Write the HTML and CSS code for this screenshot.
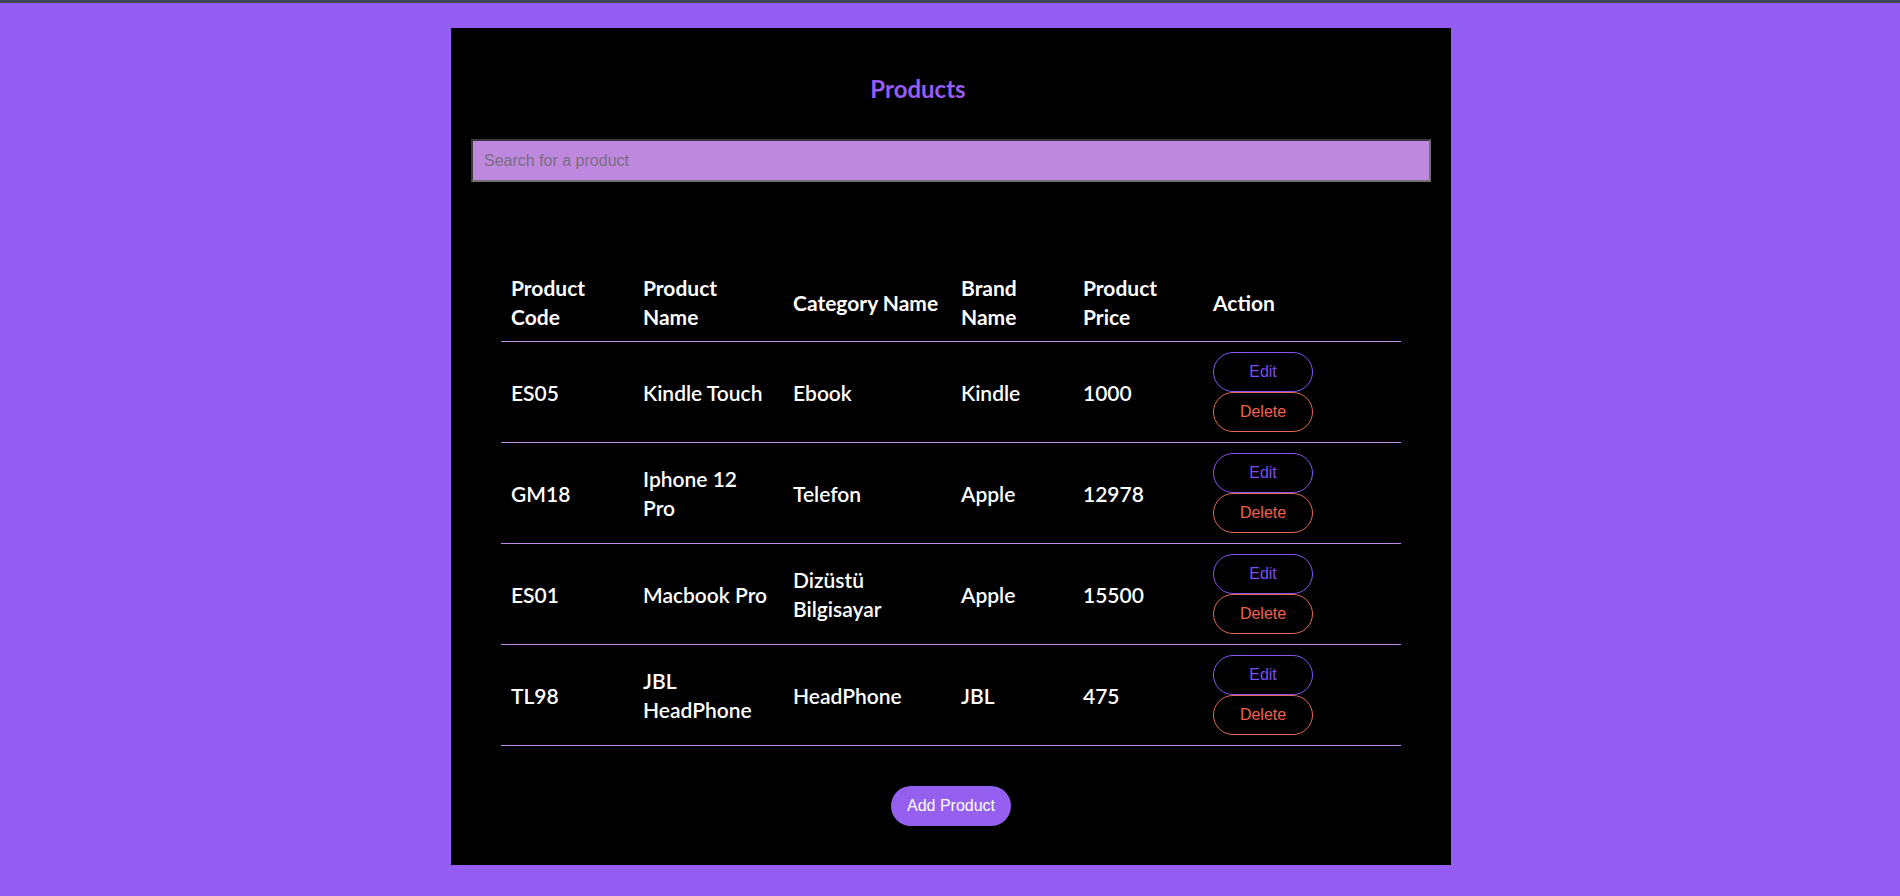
FILE: index.html
```html
<!DOCTYPE html>
<html lang="en">
<head>
<meta charset="utf-8">
<title>Products</title>
<link rel="stylesheet" href="styles.css">
</head>
<body>
<div class="topbar"></div>
<div class="page">
<main class="card">
  <h1 class="title">Products</h1>
  <input class="search" type="text" placeholder="Search for a product" autofocus>
  <table class="products">
    <colgroup>
      <col class="c1"><col class="c2"><col class="c3"><col class="c4"><col class="c5"><col class="c6">
    </colgroup>
    <thead>
      <tr>
        <th>Product Code</th>
        <th>Product Name</th>
        <th>Category Name</th>
        <th>Brand Name</th>
        <th>Product Price</th>
        <th>Action</th>
      </tr>
    </thead>
    <tbody>
      <tr>
        <td>ES05</td>
        <td class="name">Kindle Touch</td>
        <td>Ebook</td>
        <td>Kindle</td>
        <td>1000</td>
        <td><button class="btn btn-edit">Edit</button><button class="btn btn-delete">Delete</button></td>
      </tr>
      <tr>
        <td>GM18</td>
        <td class="name">Iphone 12 Pro</td>
        <td>Telefon</td>
        <td>Apple</td>
        <td>12978</td>
        <td><button class="btn btn-edit">Edit</button><button class="btn btn-delete">Delete</button></td>
      </tr>
      <tr>
        <td>ES01</td>
        <td class="name">Macbook Pro</td>
        <td>Dizüstü Bilgisayar</td>
        <td>Apple</td>
        <td>15500</td>
        <td><button class="btn btn-edit">Edit</button><button class="btn btn-delete">Delete</button></td>
      </tr>
      <tr>
        <td>TL98</td>
        <td class="name">JBL HeadPhone</td>
        <td>HeadPhone</td>
        <td>JBL</td>
        <td>475</td>
        <td><button class="btn btn-edit">Edit</button><button class="btn btn-delete">Delete</button></td>
      </tr>
    </tbody>
  </table>
  <div class="actions">
    <button class="add">Add Product</button>
  </div>
</main>
</div>
</body>
</html>
```
FILE: styles.css
```css
html, body {
  margin: 0;
  padding: 0;
}
body {
  background: #955ef2;
  font-family: "Lato", "Liberation Sans", sans-serif;
}
.topbar {
  height: 3px;
  background: #3f4552;
}
.page {
  padding-left: 2px;
}
.card {
  width: 1000px;
  margin: 25px auto 0;
  background: #000;
  padding: 46px 0 39px;
  box-sizing: border-box;
  display: flex;
  flex-direction: column;
  align-items: center;
}
.title {
  margin: 0;
  font-size: 24px;
  line-height: 29px;
  font-weight: 700;
  color: #985cf6;
  padding-right: 66px;
}
.search {
  margin-top: 36px;
  width: 960px;
  height: 43px;
  box-sizing: border-box;
  background: #be88de;
  border-width: 2px;
  border-style: solid;
  border-color: #3a3a3a #707070 #707070 #3a3a3a;
  padding: 0 11px;
  font-family: "Liberation Sans", Arial, sans-serif;
  font-size: 16px;
  color: #222;
  caret-color: #111;
  outline: none;
}
.search::placeholder {
  color: #7a6e84;
}
.products {
  margin-top: 82px;
  width: 900px;
  table-layout: fixed;
  border-collapse: collapse;
  color: #fff;
  font-size: 21px;
  line-height: 29px;
}
.c1 { width: 132px; }
.c2 { width: 150px; }
.c3 { width: 168px; }
.c4 { width: 122px; }
.c5 { width: 130px; }
.c6 { width: 198px; }
.products th,
.products td {
  padding: 10px 8px 10px 10px;
  text-align: left;
  vertical-align: middle;
  border-bottom: 1px solid #c08ae6;
}
.products th {
  font-weight: 700;
  padding-top: 9px;
  padding-bottom: 10px;
}
.products td {
  font-weight: 600;
}
.products td.name {
  padding-right: 15px;
}
.btn {
  display: block;
  width: 100px;
  height: 40px;
  box-sizing: border-box;
  border-radius: 20px;
  background: #000;
  font-family: "Liberation Sans", Arial, sans-serif;
  font-size: 16px;
  padding: 0;
  cursor: pointer;
}
.btn-edit {
  border: 1px solid #8655f0;
  color: #7a4df5;
}
.btn-delete {
  border: 1px solid #e36a56;
  color: #f2604a;
}
.actions {
  margin-top: 40px;
}
.add {
  height: 40px;
  padding: 0 16px;
  border: none;
  border-radius: 20px;
  background: #9560f0;
  color: #fff;
  font-family: "Liberation Sans", Arial, sans-serif;
  font-size: 16px;
  cursor: pointer;
}
```
